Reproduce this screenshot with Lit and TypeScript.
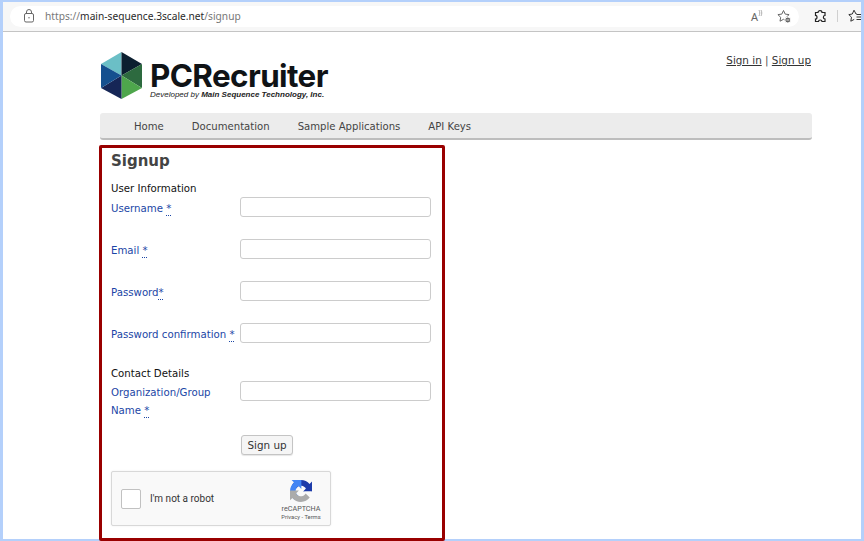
import { LitElement, html, css } from "lit";
import { customElement } from "lit/decorators.js";

@customElement("app-root")
export class AppRoot extends LitElement {
  static styles = css`
    :host { display: block; width: 864px; height: 541px; overflow: hidden; background: #fff; font-family: 'DejaVu Sans', sans-serif; }
    * { box-sizing: border-box; }
    .frame { width: 864px; height: 541px; border: solid #b4d0fb; border-width: 2px 3px 2px 3px; display: flex; flex-direction: column; }
    .toolbar { height: 30px; flex: none; background: #f7f7f7; border-bottom: 1px solid #c4c4c4; display: flex; align-items: center; padding: 0 0 1px 7px; overflow: hidden; }
    .pill { width: 789px; flex: none; height: 21px; background: #fff; border-radius: 11px; display: flex; align-items: center; padding: 0 0 0 13px; }
    .url { margin-left: 10px; font: 10.2px 'Noto Sans', sans-serif; color: #777; flex: 1; white-space: nowrap; }
    .url b { font-weight: 400; color: #2a2a2a; }
    .tools { display: flex; align-items: center; gap: 13px; padding-right: 7px; }
    .read { font: 11px 'Noto Sans', sans-serif; color: #666; display: flex; align-items: flex-start; }
    .outer { display: flex; align-items: center; margin-left: 14px; gap: 9px; flex: none; }
    .sep { width: 1px; height: 12px; background: #d0d0d0; margin-right: 1px; }
    .page { flex: 1; padding: 0 49px 0 97px; min-height: 0; }
    .head { height: 81px; display: flex; justify-content: space-between; align-items: flex-start; }
    .brand { display: flex; padding: 20px 0 0 1px; gap: 8px; }
    .brand-text { padding-top: 9px; color: #101316; }
    .name { font: 700 31.4px/30px Inter, sans-serif; letter-spacing: -0.6px; white-space: nowrap; }
    .tag { font: italic 8px/8px 'Liberation Sans', sans-serif; color: #222; white-space: nowrap; }
    .tag b { font-weight: 700; }
    .auth { padding: 21px 1px 0 0; font-size: 10.4px; line-height: 14px; color: #555; }
    .auth a { color: #333; text-decoration: underline; }
    nav { width: 712px; height: 27px; background: #ececec; border-radius: 3px; border-bottom: 2px solid #bdbdbd; display: flex; align-items: center; padding: 2px 0 0 34px; gap: 28px; font-size: 10.1px; color: #444; }
    .box { margin: 5px 0 0 -1px; width: 346px; height: 396px; border: 3px solid #990000; border-radius: 2px; padding: 3px 9px; }
    h1 { margin: 0; font: 700 15px/20px 'DejaVu Sans', sans-serif; color: #444; }
    .section { font-size: 10.2px; line-height: 14px; color: #111; margin-top: 11px; }
    .section.second { margin-top: 2px; }
    .row { display: flex; align-items: flex-start; height: 42px; }
    .rows { margin-top: 1px; }
    .rows.contact { margin-top: 0; }
    label { width: 129px; flex: none; font-size: 10.2px; line-height: 18px; color: #1b46a6; padding-top: 3px; white-space: nowrap; }
    label span { display: block; }
    abbr { text-decoration: underline dotted; text-underline-offset: 3px; }
    .input { width: 191px; height: 20px; background: #fff; border: 1px solid #ccc; border-radius: 3px; }
    .row.tall { height: 54px; }
    .actions { padding-left: 130px; }
    button { display: block; width: 52px; height: 20px; padding: 0; background: #f5f5f5; border: 1px solid #c4c4c4; border-radius: 3px; font: 10.4px 'DejaVu Sans', sans-serif; color: #333; box-shadow: 0 1px 1px rgba(0,0,0,.1); }
    .captcha { margin-top: 16px; width: 220px; height: 55px; background: #f9f9f9; border: 1px solid #d8d8d8; border-radius: 2px; box-shadow: 0 0 2px rgba(0,0,0,.08); display: flex; align-items: center; padding: 0 8px 0 9px; font-family: Roboto, sans-serif; color: #333; }
    .check { width: 20px; height: 20px; background: #fff; border: 1px solid #c1c1c1; border-radius: 2px; flex: none; }
    .robot { font-size: 10px; margin-left: 9px; flex: 1; white-space: nowrap; }
    .mark { width: 42px; display: flex; flex-direction: column; align-items: center; padding-top: 4px; color: #555; }
    .mark svg { display: block; margin-bottom: 2px; }
    .rc { font-size: 7.2px; line-height: 9px; }
    .terms { font-size: 5.8px; line-height: 9px; white-space: nowrap; }
  `;

  private field(label: unknown) {
    return html`<div class="row"><label>${label}</label><div class="input"></div></div>`;
  }

  render() {
    return html`<div class="frame">
      <div class="toolbar">
        <div class="pill">
          <svg width="12" height="14" viewBox="0 0 12 14" fill="none" stroke="#666" stroke-width="1"><rect x="1.5" y="4.5" width="9" height="8.5" rx="1.5"/><path d="M3.5 4.5V3a2.5 2.5 0 0 1 5 0v1.5"/><circle cx="6" cy="8.7" r=".7" fill="#666" stroke="none"/></svg>
          <div class="url">https://<b>main-sequence.3scale.net</b>/signup</div>
          <div class="tools">
            <div class="read">A<svg width="6" height="8" viewBox="0 0 6 8" fill="none" stroke="#999" stroke-width=".8"><path d="M1 1c1 2 1 4 0 6M3 1c1 2 1 4 0 6"/></svg></div>
            <svg width="15" height="15" viewBox="0 0 15 15" fill="none" stroke="#666" stroke-width="1"><path d="M6.5 1.5l1.7 3.6 3.9.5-2.8 2.7.7 3.9-3.5-1.9-3.5 1.9.7-3.9L.9 5.6l3.9-.5z"/><circle cx="10.8" cy="11" r="3" fill="#666" stroke="#fff"/><path d="M9.3 11h3" stroke="#fff" stroke-width=".8"/></svg>
          </div>
        </div>
        <div class="outer">
          <svg width="15" height="15" viewBox="0 0 15 15" fill="none" stroke="#222" stroke-width="1.2"><path d="M5 3.5c0-2.5 4-2.5 4 0h3v3c-2.2 0-2.2 3.5 0 3.5v2.5H9c0-2-3.5-2-3.5 0H2.5V10c2 .5 2-4 0-3.5V3.5z"/></svg>
          <div class="sep"></div>
          <svg width="14" height="15" viewBox="0 0 14 15" fill="none" stroke="#333" stroke-width="1"><path d="M9 5.2L8 5 6 1.2 4.3 5 .8 5.6l2.7 2.6-.7 4 3.4-1.8M9 5.5H13.5M8.5 8H13.5M8.5 10.5H13.5"/></svg>
        </div>
      </div>
      <div class="page">
        <div class="head">
          <div class="brand">
            <svg width="41" height="47" viewBox="0 0 41 47">
              <polygon points="20.5,0 20.5,23.5 0,12" fill="#6bbfc6"/>
              <polygon points="20.5,0 41,12 20.5,23.5" fill="#0c1f30"/>
              <polygon points="41,12 41,36 20.5,23.5" fill="#2d6a3f"/>
              <polygon points="41,36 20.5,47 20.5,23.5" fill="#4ea64c"/>
              <polygon points="20.5,47 0,36 20.5,23.5" fill="#162656"/>
              <polygon points="0,36 0,12 20.5,23.5" fill="#15508f"/>
            </svg>
            <div class="brand-text">
              <div class="name">PCRecruiter</div>
              <div class="tag">Developed by <b>Main Sequence Technology, Inc.</b></div>
            </div>
          </div>
          <div class="auth"><a>Sign in</a> | <a>Sign up</a></div>
        </div>
        <nav><span>Home</span><span>Documentation</span><span>Sample Applications</span><span>API Keys</span></nav>
        <div class="box">
          <h1>Signup</h1>
          <div class="section">User Information</div>
          <div class="rows">
            ${this.field(html`Username <abbr>*</abbr>`)}
            ${this.field(html`Email <abbr>*</abbr>`)}
            ${this.field(html`Password<abbr>*</abbr>`)}
            ${this.field(html`Password confirmation <abbr>*</abbr>`)}
          </div>
          <div class="section second">Contact Details</div>
          <div class="rows contact">
            <div class="row tall"><label><span>Organization/Group</span><span>Name <abbr>*</abbr></span></label><div class="input"></div></div>
          </div>
          <div class="actions"><button>Sign up</button></div>
          <div class="captcha">
            <div class="check"></div>
            <div class="robot">I'm not a robot</div>
            <div class="mark">
              <svg width="22" height="22" viewBox="0 0 64 64">
                <path fill="#1c3aa9" d="M64 31.955l-.033-1.37V4.687l-7.16 7.16C50.948 4.674 42.033.093 32.05.093c-10.4 0-19.627 4.96-25.48 12.64l11.74 11.864a15.55 15.55 0 0 1 4.744-5.32c2.05-1.6 4.953-2.906 8.995-2.906.49 0 .867.057 1.146.164 5.737.312 10.7 3.74 13.115 8.4l-8.16 8.16c10.35-.04 22.04-.064 25.85.063"/>
                <path fill="#4285f4" d="M31.95.002l-1.37.033H4.69l7.16 7.16C4.675 13.054.094 21.97.094 31.95c0 10.4 4.96 19.627 12.64 25.48l11.864-11.74a15.55 15.55 0 0 1-5.32-4.744c-1.6-2.05-2.906-4.953-2.906-8.995 0-.49.057-.867.164-1.146.312-5.737 3.74-10.7 8.4-13.115l8.16 8.16c-.04-10.35-.064-22.04.063-25.85"/>
                <path fill="#ababab" d="M.002 32l.033 1.37v25.9l7.16-7.16c5.857 7.17 14.772 11.75 24.755 11.75 10.4 0 19.627-4.96 25.48-12.64L45.57 39.358a15.55 15.55 0 0 1-4.744 5.32c-2.05 1.6-4.953 2.906-8.995 2.906-.49 0-.867-.057-1.146-.164-5.737-.312-10.7-3.74-13.115-8.4l8.16-8.16c-10.35.04-22.04.064-25.85-.063"/>
              </svg>
              <div class="rc">reCAPTCHA</div>
              <div class="terms">Privacy - Terms</div>
            </div>
          </div>
        </div>
      </div>
    </div>`;
  }
}
